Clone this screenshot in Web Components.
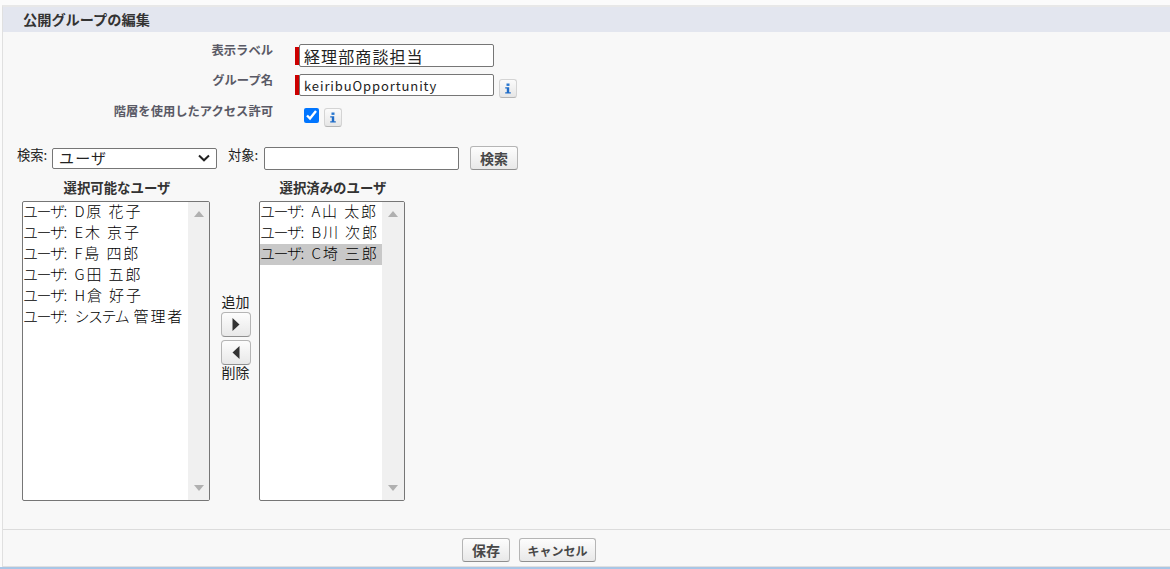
<!DOCTYPE html>
<html lang="ja">
<head>
<meta charset="utf-8">
<title>公開グループの編集</title>
<style>
  html, body { margin: 0; height: 100%; overflow: hidden; }
  body { font-family: "Noto Sans CJK JP", "Liberation Sans", sans-serif; background: #fff; }
</style>
</head>
<body>
<sf-page>
  <sf-section-title>公開グループの編集</sf-section-title>
  <sf-form-row label="表示ラベル" required value="経理部商談担当" big></sf-form-row>
  <sf-form-row label="グループ名" required value="keiribuOpportunity" info></sf-form-row>
  <sf-form-row label="階層を使用したアクセス許可" checkbox info></sf-form-row>
  <sf-search-bar></sf-search-bar>
  <sf-dueling>
    <sf-listbox slot="left" title="選択可能なユーザ" width="188" bar="21" items="ユーザ: D原 花子|ユーザ: E木 京子|ユーザ: F島 四郎|ユーザ: G田 五郎|ユーザ: H倉 好子|ユーザ: システム 管理者"></sf-listbox>
    <sf-listbox slot="right" title="選択済みのユーザ" width="146" bar="22" selected="2" items="ユーザ: A山 太郎|ユーザ: B川 次郎|ユーザ: C埼 三郎"></sf-listbox>
  </sf-dueling>
  <sf-footer slot="footer">
    <sf-btn style="width:48px;font-size:14px">保存</sf-btn>
    <sf-btn style="width:77px;font-size:12px">キャンセル</sf-btn>
  </sf-footer>
</sf-page>

<script>
const FONT = '"Noto Sans CJK JP", "Liberation Sans", sans-serif';

class SfPage extends HTMLElement {
  constructor() {
    super();
    this.attachShadow({ mode: 'open' });
    this.shadowRoot.innerHTML = `
    <style>
      :host { display: flex; flex-direction: column; box-sizing: border-box; height: 569px; padding-top: 5px;
        background: #fbfbfb; border-bottom: 2px solid #a9c6e6; font-family: ${FONT}; }
      .box { flex: 1; display: flex; flex-direction: column; margin-left: 2px; background: #f8f8f8;
        border-top: 2px solid #e8e8e8; border-left: 1px solid #e0e0e0; border-bottom: 1px solid #e0e0e0; }
      .main { flex: 1; }
    </style>
    <div class="box">
      <div class="main"><slot></slot></div>
      <slot name="footer"></slot>
    </div>`;
  }
}

class SfSectionTitle extends HTMLElement {
  constructor() {
    super();
    this.attachShadow({ mode: 'open' });
    this.shadowRoot.innerHTML = `
    <style>
      :host { display: block; height: 25px; line-height: 24px; padding-left: 20px; background: #e3e6ef;
        font-size: 14.2px; font-weight: bold; color: #333; margin-bottom: 12px; }
    </style>
    <slot></slot>`;
  }
}

class SfInfo extends HTMLElement {
  constructor() {
    super();
    this.attachShadow({ mode: 'open' });
    this.shadowRoot.innerHTML = `
    <style>
      :host { display: inline-flex; align-items: center; justify-content: center; box-sizing: border-box;
        width: 18px; height: 19px; border: 1px solid #d4d4d4; border-bottom-color: #b5b5b5; border-radius: 3px;
        background: linear-gradient(#fbfbfb, #e6e6e6); }
      svg { display: block; }
    </style>
    <svg width="8" height="11" viewBox="0 0 8 11">
      <rect x="2.5" y="0.5" width="3" height="2.4" fill="#2a78d0"/>
      <path d="M1.2 4.2H5.2V9.2H6.8V10.6H1.2V9.2H2.8V5.6H1.2Z" fill="#1f6cc8"/>
    </svg>`;
  }
}

class SfFormRow extends HTMLElement {
  constructor() {
    super();
    this.attachShadow({ mode: 'open' });
  }
  connectedCallback() {
    const label = this.getAttribute('label');
    const big = this.hasAttribute('big');
    const info = this.hasAttribute('info');
    let field;
    if (this.hasAttribute('checkbox')) {
      field = `<div class="check"><input type="checkbox" checked><sf-info></sf-info></div>`;
    } else {
      field = `<div class="mark ${big ? 'big' : ''}"></div><input class="text ${big ? 'big' : ''}" type="text" value="${this.getAttribute('value')}">
        ${info ? '<sf-info class="after"></sf-info>' : ''}`;
    }
    this.shadowRoot.innerHTML = `
    <style>
      :host { display: flex; align-items: flex-start; height: 30px; }
      :host([checkbox]) { height: 42px; }
      label { width: 270px; text-align: right; font-size: 12.3px; font-weight: bold; color: #5a5a66;
        line-height: 16px; margin-top: -2px; flex: none; }
      :host([checkbox]) label { margin-top: -1px; }
      .field { display: flex; align-items: flex-start; margin-left: 22px; }
      .mark { width: 4px; height: 20px; background: #c00; margin-top: 1px; }
      .mark.big { height: 18px; margin-top: 3px; }
      .text { box-sizing: border-box; width: 195px; height: 22px; margin: 0; padding: 0 4px; border: 1px solid #767676;
        border-radius: 2px; background: #fff; font: 13px ${FONT}; letter-spacing: .9px; color: #222; outline: none; }
      .text.big { height: 23px; font-size: 16px; letter-spacing: 1.1px; }
      .after { margin: 5px 0 0 5px; }
      .check { display: flex; align-items: flex-start; margin-left: 9px; margin-top: 4px; }
      .check input { width: 15px; height: 15px; margin: 0 5px 0 0; accent-color: #0075ff; }
    </style>
    <label>${label}</label>
    <div class="field">${field}</div>`;
  }
}

class SfBtn extends HTMLElement {
  constructor() {
    super();
    this.attachShadow({ mode: 'open' });
    this.shadowRoot.innerHTML = `
    <style>
      :host { display: inline-flex; align-items: center; justify-content: center; box-sizing: border-box;
        height: 24px; border: 1px solid #b5b5b5; border-bottom-color: #8f8f8f; border-radius: 3px;
        background: linear-gradient(#fdfdfd, #e8e8e8); font-size: 12.5px; font-weight: bold; color: #484848; }
    </style>
    <slot></slot>`;
  }
}

class SfSelect extends HTMLElement {
  constructor() {
    super();
    this.attachShadow({ mode: 'open' });
    this.shadowRoot.innerHTML = `
    <style>
      :host { display: flex; align-items: center; justify-content: space-between; box-sizing: border-box;
        width: 165px; height: 21px; padding: 0 6px; border: 1px solid #767676; border-radius: 2px;
        background: #fff; font-size: 15px; letter-spacing: 1.2px; color: #222; }
      span { display: block; margin-top: -2px; }
      svg { display: block; }
    </style>
    <span><slot></slot></span>
    <svg width="12" height="8" viewBox="0 0 12 8"><path d="M1 1.5L6 6.3L11 1.5" fill="none" stroke="#222" stroke-width="2"/></svg>`;
  }
}

class SfSearchBar extends HTMLElement {
  constructor() {
    super();
    this.attachShadow({ mode: 'open' });
    this.shadowRoot.innerHTML = `
    <style>
      :host { display: flex; align-items: center; height: 24px; padding-left: 14px; font-size: 13.3px; color: #222; }
      span { display: block; margin-top: -8px; }
      .q { width: 31px; margin-right: 4px; }
      .for { width: 32px; margin-left: 11px; margin-right: 4px; }
      input { box-sizing: border-box; width: 195px; height: 23px; margin: 0; border: 1px solid #767676; border-radius: 2px; background: #fff; }
      sf-btn { margin-left: 11px; width: 48px; font-size: 14px; }
    </style>
    <span class="q">検索:</span>
    <sf-select>ユーザ</sf-select>
    <span class="for">対象:</span>
    <input type="text">
    <sf-btn>検索</sf-btn>`;
  }
}

class SfListbox extends HTMLElement {
  constructor() {
    super();
    this.attachShadow({ mode: 'open' });
  }
  connectedCallback() {
    const selected = this.getAttribute('selected');
    // katakana is drawn narrower than kanji in the reference, so it gets its own spacing
    const rows = this.getAttribute('items').split('|').map((t, i) =>
      `<div class="opt ${String(i) === selected ? 'sel' : ''}">${t.replace(/[ァ-ヶー]+/g, '<span class="kana">$&</span>')}</div>`).join('');
    this.shadowRoot.innerHTML = `
    <style>
      :host { display: block; }
      .title { text-align: center; font-size: 13.4px; font-weight: bold; color: #333; height: 20px; line-height: 12px; padding-left: 2px; box-sizing: border-box; }
      .box { box-sizing: border-box; width: ${this.getAttribute('width')}px; height: 300px; display: flex;
        border: 1px solid #767676; border-radius: 2px; background: #fff; overflow: hidden; }
      .opts { flex: 1; min-width: 0; }
      .opt { height: 21px; line-height: 17px; font-size: 15px; font-weight: 300; letter-spacing: 1.9px; color: #000; white-space: nowrap; }
      .kana { letter-spacing: -1.4px; }
      .opt.sel { background: #c8c8c8; }
      .bar { flex: none; width: ${this.getAttribute('bar')}px; background: #f0f0f0; display: flex; flex-direction: column; align-items: center;
        justify-content: space-between; padding: 9px 0; box-sizing: border-box; }
      .up, .down { width: 0; height: 0; border-left: 5px solid transparent; border-right: 5px solid transparent; }
      .up { border-bottom: 6px solid #b0b0b0; }
      .down { border-top: 6px solid #b0b0b0; }
    </style>
    <div class="title">${this.getAttribute('title')}</div>
    <div class="box">
      <div class="opts">${rows}</div>
      <div class="bar"><div class="up"></div><div class="down"></div></div>
    </div>`;
  }
}

class SfMoveButtons extends HTMLElement {
  constructor() {
    super();
    this.attachShadow({ mode: 'open' });
    this.shadowRoot.innerHTML = `
    <style>
      :host { display: flex; flex-direction: column; align-items: center; font-size: 14px; color: #222; line-height: 14px; }
      button { box-sizing: border-box; width: 30px; height: 25px; margin: 0; padding: 0; display: flex; align-items: center; justify-content: center;
        border: 1px solid #b5b5b5; border-bottom-color: #8f8f8f; border-radius: 4px; background: linear-gradient(#fdfdfd, #e8e8e8); }
      .first { margin-top: 4px; }
      .second { margin-top: 3px; }
      svg { display: block; }
    </style>
    <span>追加</span>
    <button class="first"><svg width="8" height="13" viewBox="0 0 8 13"><path d="M.5 0L7.5 6.5L.5 13Z" fill="#333"/></svg></button>
    <button class="second"><svg width="8" height="13" viewBox="0 0 8 13"><path d="M7.5 0L.5 6.5L7.5 13Z" fill="#333"/></svg></button>
    <span>削除</span>`;
  }
}

class SfDueling extends HTMLElement {
  constructor() {
    super();
    this.attachShadow({ mode: 'open' });
    this.shadowRoot.innerHTML = `
    <style>
      :host { display: flex; align-items: flex-start; padding: 11px 0 0 19px; }
      .mid { width: 49px; padding: 113px 0 0 2px; box-sizing: border-box; display: flex; justify-content: center; }
    </style>
    <slot name="left"></slot>
    <div class="mid"><sf-move-buttons></sf-move-buttons></div>
    <slot name="right"></slot>`;
  }
}

class SfFooter extends HTMLElement {
  constructor() {
    super();
    this.attachShadow({ mode: 'open' });
    this.shadowRoot.innerHTML = `
    <style>
      :host { display: flex; justify-content: flex-start; gap: 9px; height: 37px; box-sizing: border-box; padding: 8px 0 0 459px;
        border-top: 1px solid #dcdcdc; }
    </style>
    <slot></slot>`;
  }
}

customElements.define('sf-page', SfPage);
customElements.define('sf-section-title', SfSectionTitle);
customElements.define('sf-info', SfInfo);
customElements.define('sf-form-row', SfFormRow);
customElements.define('sf-btn', SfBtn);
customElements.define('sf-select', SfSelect);
customElements.define('sf-search-bar', SfSearchBar);
customElements.define('sf-listbox', SfListbox);
customElements.define('sf-move-buttons', SfMoveButtons);
customElements.define('sf-dueling', SfDueling);
customElements.define('sf-footer', SfFooter);
</script>
</body>
</html>
